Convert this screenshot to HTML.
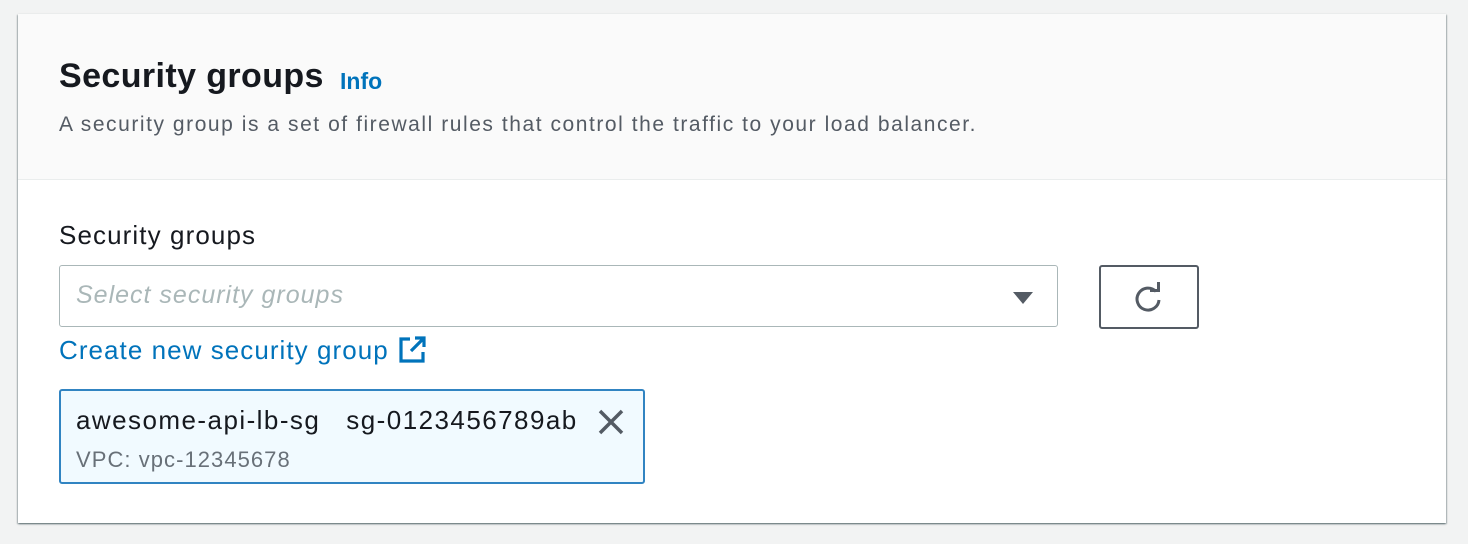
<!DOCTYPE html>
<html><head><style>
body{margin:0;width:1468px;height:544px;background:#f2f3f3;font-family:"Liberation Sans",sans-serif;position:relative;overflow:hidden}
.card{position:absolute;left:18px;top:14px;width:1428px;height:509px;background:#fff;box-shadow:0 1px 2px 0 rgba(0,28,36,.4),1px 1px 1px 0 rgba(0,28,36,.2),-1px 1px 1px 0 rgba(0,28,36,.2)}
.hdr{position:absolute;left:0;top:0;width:1428px;height:165px;background:#fafafa;border-bottom:1px solid #eaeded}
.a{position:absolute;white-space:nowrap}
</style></head><body>
<div class="card">
<div class="hdr"></div>
<div class="a" style="left:41px;top:43px;font-size:34px;font-weight:bold;color:#16191f;letter-spacing:0.4px">Security groups</div>
<div class="a" style="left:322px;top:54px;font-size:23px;font-weight:bold;color:#0073bb">Info</div>
<div class="a" style="left:41px;top:99px;font-size:21px;color:#545b64;letter-spacing:1.55px">A security group is a set of firewall rules that control the traffic to your load balancer.</div>
<div class="a" style="left:41px;top:206px;font-size:26px;color:#16191f;letter-spacing:1.1px">Security groups</div>
<div class="a" style="left:41px;top:251px;width:997px;height:60px;border:1px solid #aab7b8;border-radius:3px"></div>
<div class="a" style="left:58px;top:267px;font-size:25px;font-style:italic;color:#aab7b8;letter-spacing:1px">Select security groups</div>
<svg class="a" style="left:994px;top:276px" width="22" height="16"><path d="M1 2h20l-10 12z" fill="#545b64"/></svg>
<div class="a" style="left:1081px;top:251px;width:96px;height:60px;border:2px solid #545b64;border-radius:3px"></div>
<svg class="a" style="left:1112px;top:266px" width="36" height="36" viewBox="0 0 36 36"><path d="M26 11.5A11 11 0 1 0 29 20" fill="none" stroke="#545b64" stroke-width="3"/><path d="M20 10.5h8.5V2" fill="none" stroke="#545b64" stroke-width="3"/></svg>
<div class="a" style="left:41px;top:321px;font-size:26px;color:#0073bb;letter-spacing:1.05px">Create new security group</div>
<svg class="a" style="left:380px;top:322px" width="30" height="28" viewBox="0 0 30 28"><path d="M12 3H3v22h22v-9" fill="none" stroke="#0073bb" stroke-width="3.2"/><path d="M17 2h9v9M26 2L13 15" fill="none" stroke="#0073bb" stroke-width="3.2"/></svg>
<div class="a" style="left:41px;top:375px;width:582px;height:91px;background:#f1faff;border:2px solid #3184c2;border-radius:3px"></div>
<div class="a" style="left:58px;top:391px;font-size:26px;color:#16191f;letter-spacing:1.45px">awesome-api-lb-sg&nbsp;&nbsp;&nbsp;sg-0123456789ab</div>
<svg class="a" style="left:580px;top:395px" width="26" height="26"><path d="M2 2l22 22M24 2L2 24" stroke="#545b64" stroke-width="3.5"/></svg>
<div class="a" style="left:58px;top:433px;font-size:22px;color:#687078;letter-spacing:1.05px">VPC: vpc-12345678</div>
</div>
</body></html>
